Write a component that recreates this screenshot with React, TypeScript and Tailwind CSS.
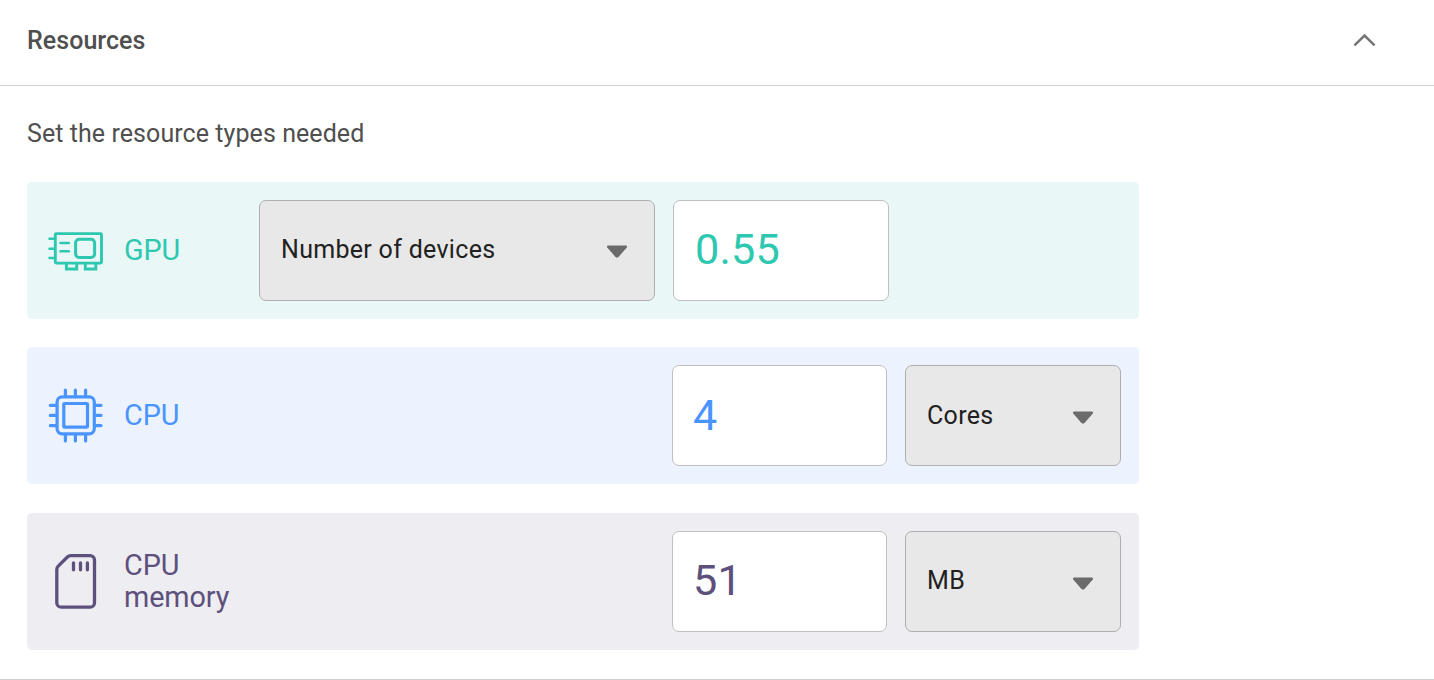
import type { ReactNode } from "react";

function Caret() {
  return (
    <svg width="22" height="16" viewBox="0 -2.500 22 16" className="shrink-0" aria-hidden="true">
      <path
        d="M2.3 1h17.4c1.3 0 1.800 1.400.9 2.300l-8.100 9.100a2.400 2.400 0 0 1-3 0L1.400 3.300C.5 2.400 1 1 2.300 1z"
        fill="#6b6b6b"
      />
    </svg>
  );
}

function GpuIcon() {
  return (
    <svg width="60" height="60" viewBox="46 221 60 60" fill="none" stroke="#2ec7b0" strokeWidth="2.900" strokeLinecap="round" strokeLinejoin="round" aria-hidden="true">
      <rect x="55.300" y="233.600" width="46.200" height="29.500" rx="1" />
      <rect x="75.600" y="239.200" width="19" height="18.300" rx="3.600" strokeWidth="3" />
      <path d="M60.500 243h8.300M60.500 251.300h8.300M49.500 238.700H54M49.500 248.700H54M49.500 258H54" strokeWidth="2.600" />
      <path d="M66.400 264v5h10.300v-5M85.300 264v5h10.500v-5" strokeLinejoin="miter" />
    </svg>
  );
}

function CpuIcon() {
  return (
    <svg width="60" height="60" viewBox="46 386 60 60" fill="none" stroke="#4a94ff" strokeWidth="3.200" strokeLinecap="round" aria-hidden="true">
      <rect x="57.100" y="396.800" width="37.200" height="37" rx="5" />
      <rect x="63.800" y="403.500" width="23.700" height="23.700" rx="0.800" />
      <path d="M65.400 390v6M75.400 390v6M85.600 390v6M65.400 435v6M75.400 435v6M85.600 435v6M50.300 405.300h6M50.300 415.400h6M50.300 425.600h6M95 405.300h6M95 415.400h6M95 425.600h6" />
    </svg>
  );
}

function MemoryIcon() {
  return (
    <svg width="60" height="60" viewBox="46 552 60 60" fill="none" stroke="#5d507c" strokeWidth="3.300" strokeLinecap="round" strokeLinejoin="round" aria-hidden="true">
      <path d="M70.700 555.700h19.300a4.500 4.500 0 0 1 4.500 4.500v42.500a4.500 4.500 0 0 1-4.500 4.500H61.300a4.500 4.500 0 0 1-4.500-4.500V569.500c0-1.300.5-2.400 1.400-3.300l9.200-9.200c.9-.9 2-1.300 3.300-1.300z" />
      <path d="M73.500 562.800v7M80.500 562.800v7M87.400 562.800v7" />
    </svg>
  );
}

function Select({ label, className }: { label: string; className: string }) {
  return (
    <button
      type="button"
      className={`flex h-[101px] shrink-0 items-center justify-between rounded-[7px] border border-[#afafaf] bg-[#e8e8e8] pr-[26px] pl-[21px] text-[25px] tracking-[0.300px] text-[#212121] ${className}`}
    >
      <span className="pb-px">{label}</span>
      <Caret />
    </button>
  );
}

function Amount({ value, className }: { value: string; className: string }) {
  return (
    <input
      defaultValue={value}
      className={`h-[101px] shrink-0 rounded-[7px] border border-[#bfbfbf] bg-white text-[43.200px] tracking-[0.200px] outline-none ${className}`}
    />
  );
}

function Row({ icon, label, className, children }: { icon: ReactNode; label: ReactNode; className: string; children: ReactNode }) {
  return (
    <div className={`flex h-[137px] w-[1112px] items-center rounded-[5px] pl-[19px] ${className}`}>
      {icon}
      <span className="ml-[18px] w-[135px] pb-[2px] text-[28.800px] leading-[32px] tracking-[-0.100px]">{label}</span>
      {children}
    </div>
  );
}

export default function App() {
  return (
    <section className="flex h-[680px] flex-col overflow-hidden border-b border-[#d0d0d0] bg-white font-['Roboto',sans-serif] text-[#4f4f4f]">
      <header className="flex h-[86px] shrink-0 items-center justify-between border-b border-[#d0d0d0] pr-[58px] pb-[4px] pl-[27px]">
        <h2 className="pt-px text-[25px] font-medium tracking-[0.050px]">Resources</h2>
        <svg width="23" height="16" viewBox="0 0.500 24 16" fill="none" stroke="#757575" strokeWidth="2.600" aria-hidden="true">
          <path d="M1.500 13L12 2.800 22.500 13" />
        </svg>
      </header>
      <div className="flex flex-col pl-[27px]">
        <p className="h-[96px] pt-[30px] text-[25px] leading-[36px] tracking-[0.070px]">Set the resource types needed</p>
        <div className="flex flex-col">
          <Row icon={<GpuIcon />} label="GPU" className="bg-[#e9f7f7] text-[#2ec7b0]">
            <Select label="Number of devices" className="w-[396px] pb-px" />
            <Amount value="0.55" className="ml-[18px] w-[216px] pb-[2px] pl-[21px]" />
          </Row>
          <Row icon={<CpuIcon />} label="CPU" className="mt-7 bg-[#ecf3ff] text-[#4a94ff]">
            <Amount value="4" className="ml-[413px] w-[215px] pl-[20px]" />
            <Select label="Cores" className="ml-[18px] w-[216px] pt-px" />
          </Row>
          <Row icon={<MemoryIcon />} label={<>CPU<br />memory</>} className="mt-[29px] bg-[#eeedf2] text-[#5d507c]">
            <Amount value="51" className="ml-[413px] w-[215px] pb-[2px] pl-[20px]" />
            <Select label="MB" className="ml-[18px] w-[216px]" />
          </Row>
        </div>
      </div>
    </section>
  );
}
